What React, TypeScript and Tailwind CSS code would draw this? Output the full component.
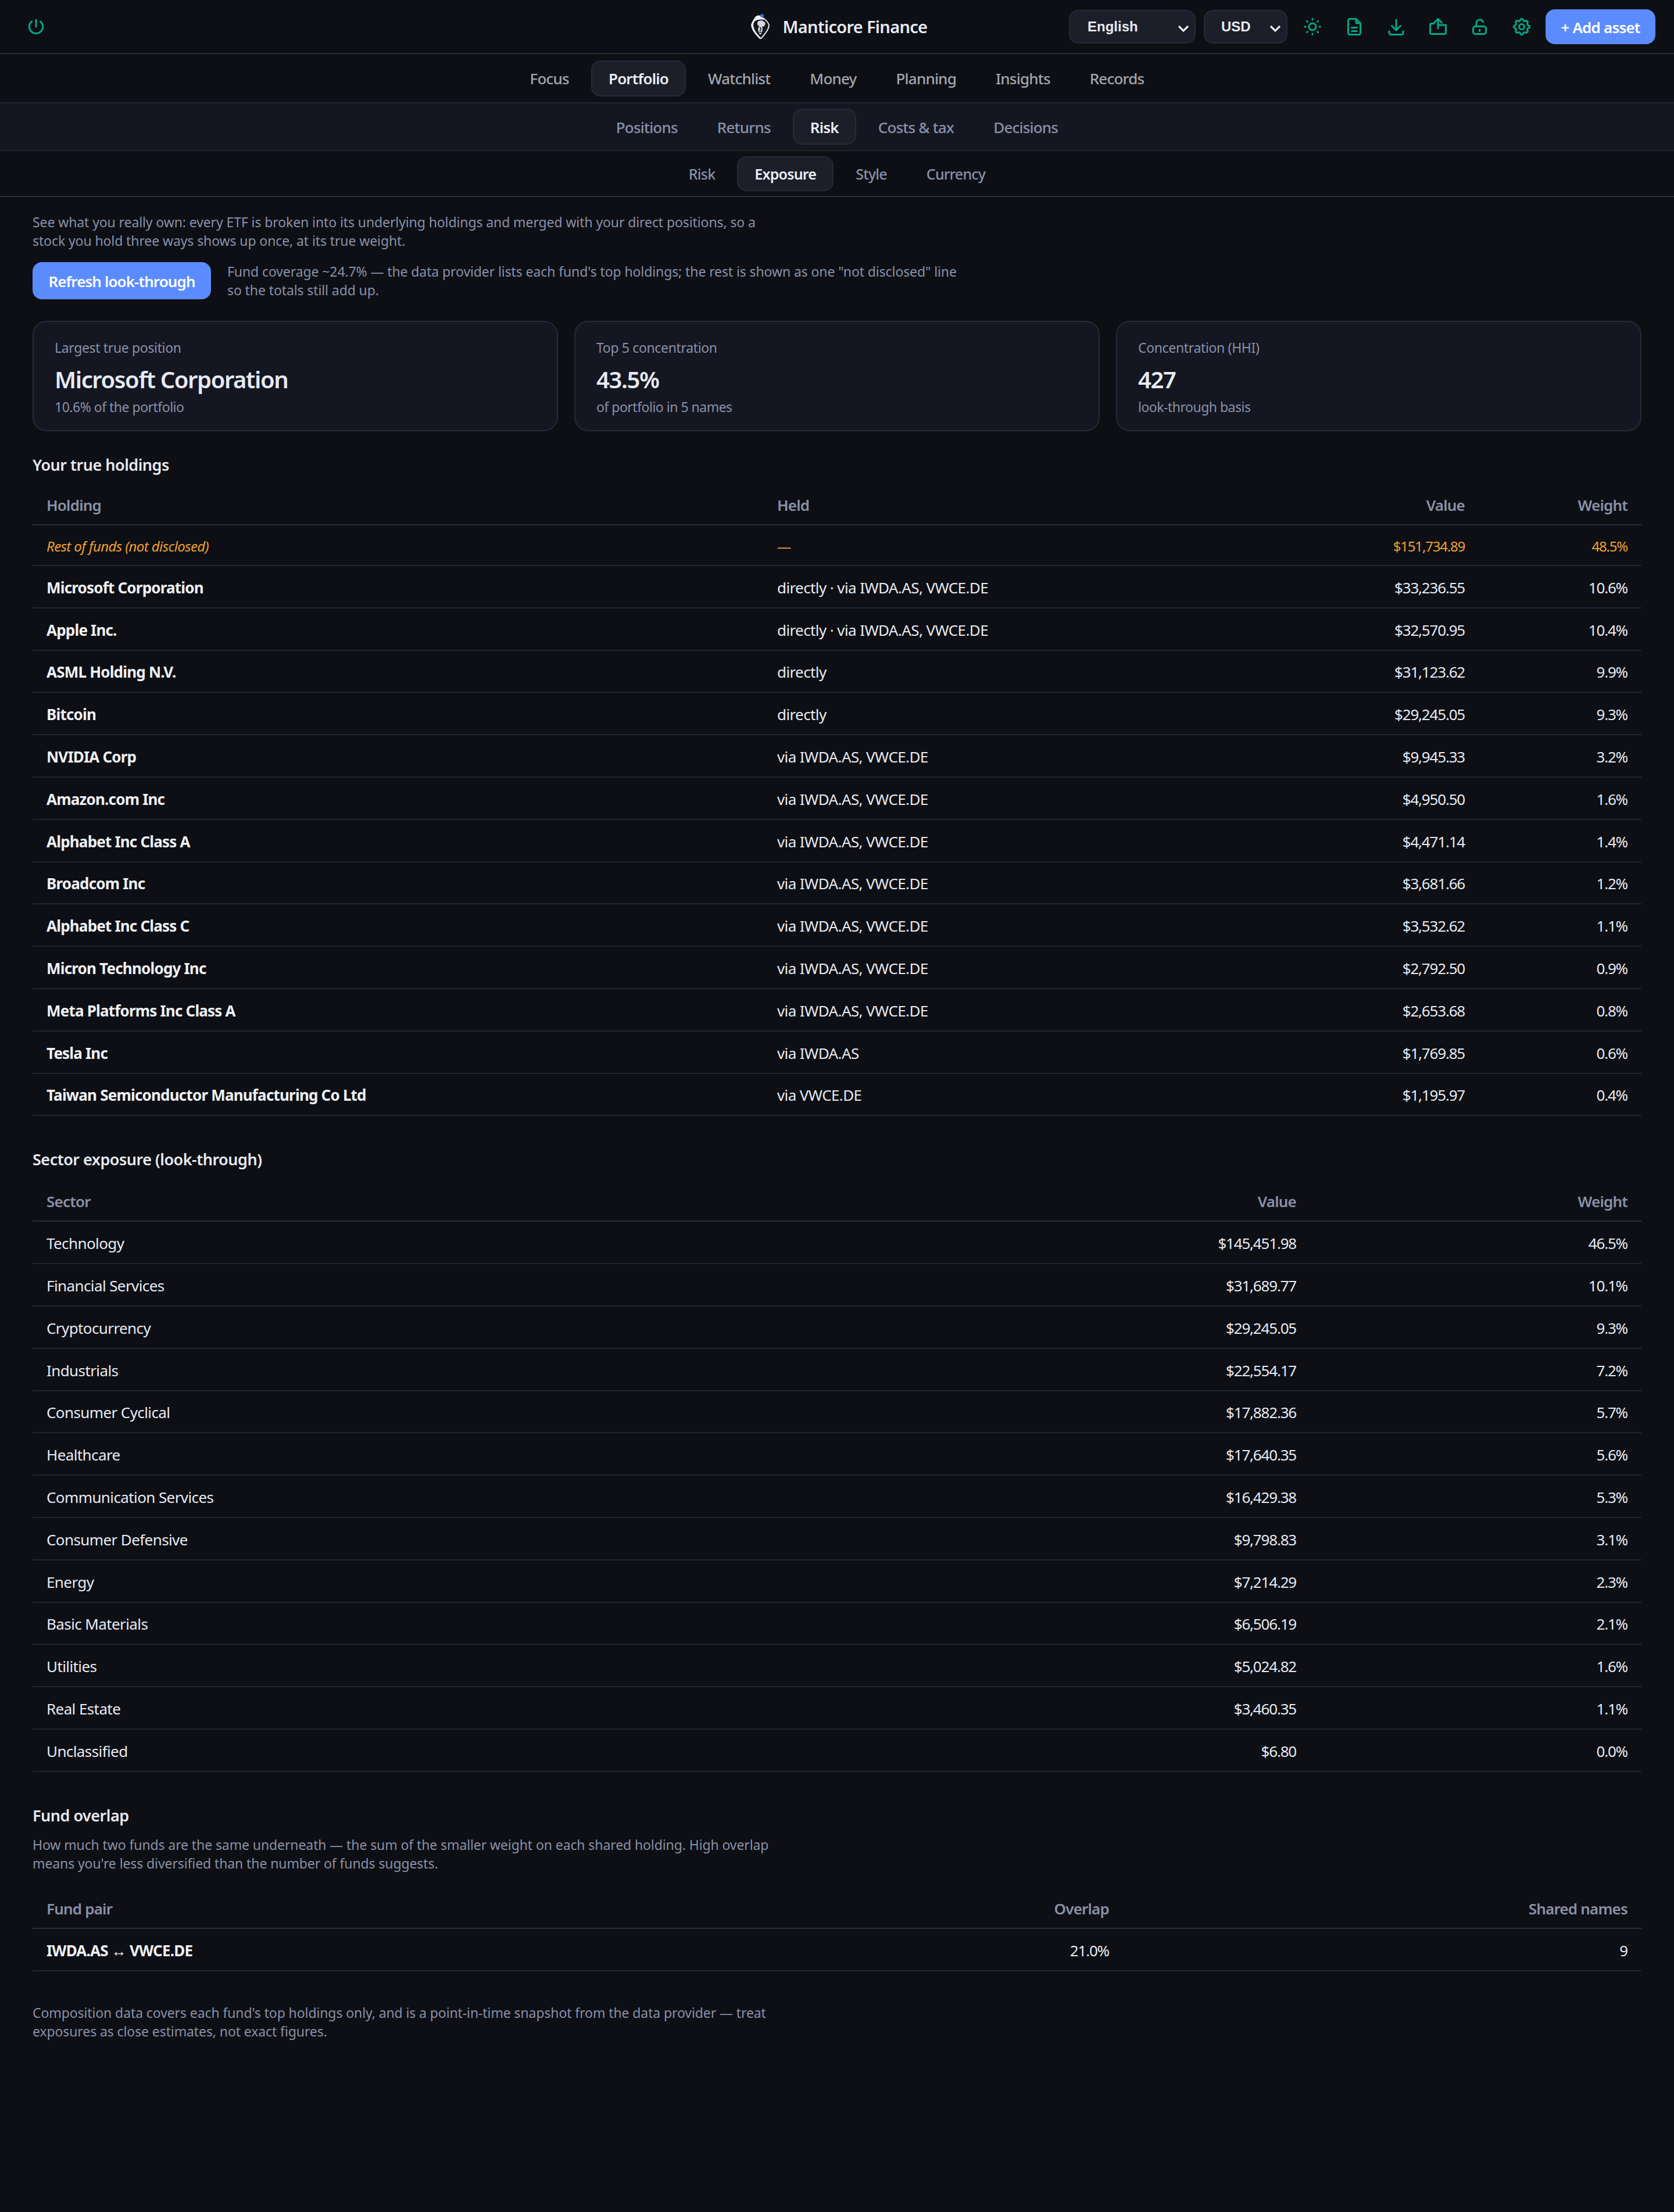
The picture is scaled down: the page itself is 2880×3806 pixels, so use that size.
import React from "react";
import { TbPower, TbSun, TbFileDescription, TbDownload, TbSettings } from "react-icons/tb";

function Logo() {
  return (
    <svg width="34" height="44" viewBox="0 0 34 44" className="shrink-0">
      <path d="M8 6 C10 3 17 2 22 6 C26 9 31 13 33 19 C33 26 27 34 19 43 L16 43 C9 36 2 28 1 19 C2 14 5 10 8 6 Z" fill="#e8eaf0" />
      <path d="M8 12 C13 9 20 9 24 10 C28 13 31 17 31 20 C30 27 24 34 18 41 C12 35 6 28 5 20 C5 17 6 14 8 12 Z" fill="#17181f" />
      <path d="M13 13 C17 10 24 11 26 17 L23 22 L20 21 C22 26 21 31 17 36 C13 31 12 26 15 21 C12 19 11 16 13 13 Z" fill="#d5d8e0" />
      <path d="M16 23 C19 25 19 27 16 29 M15 31 C17 32 18 32 19 31" stroke="#17181f" strokeWidth="1.6" fill="none" />
      <path d="M8 6 C10 2 17 1 21 6 L14 9 Z" fill="#f6f7fa" />
      <circle cx="20" cy="3" r="3" fill="#2f6fe0" />
    </svg>
  );
}

function ShareIcon() {
  return (
    <svg width="36" height="36" viewBox="0 0 36 36" fill="none" stroke="#00a886" strokeWidth="3" strokeLinecap="round" strokeLinejoin="round">
      <path d="M11 12.5H7A2.5 2.5 0 0 0 4.500 15V28A2.500 2.500 0 0 0 7 30.500H29A2.500 2.500 0 0 0 31.500 28V15H18" />
      <path d="M18 4.500V21" />
      <path d="M11.500 11 18 4.500 24.500 11" />
    </svg>
  );
}

function LockIcon() {
  return (
    <svg width="36" height="36" viewBox="0 0 36 36" fill="none" stroke="#00a886" strokeWidth="3" strokeLinecap="round" strokeLinejoin="round">
      <rect x="6.500" y="17.500" width="22" height="13" rx="3.500" />
      <path d="M12 17.500V12a6 6 0 0 1 11.500-2.400" />
      <path d="M17.500 23v2.500" />
    </svg>
  );
}

function Chevron() {
  return (
    <svg width="20" height="12" viewBox="0 0 20 12" fill="none" stroke="#e8eaf2" strokeWidth="3.200" className="absolute right-[9px] top-[24px]">
      <path d="M2 2 10 10 18 2" />
    </svg>
  );
}

function Tab({ label, active, h, tone }: { label: string; active?: boolean; h: string; tone: string }) {
  return (
    <div
      className={`flex items-center justify-center rounded-[16px] border-2 px-[28px] pt-[2px] font-medium ${h} ${
        active ? "border-[#262a36] bg-[#1c1f2a] font-semibold text-[#eceef4]" : `border-transparent ${tone}`
      }`}
    >
      {label}
    </div>
  );
}

const holdings: [string, string, string, string][] = [
  ["Microsoft Corporation", "directly · via IWDA.AS, VWCE.DE", "$33,236.55", "10.6%"],
  ["Apple Inc.", "directly · via IWDA.AS, VWCE.DE", "$32,570.95", "10.4%"],
  ["ASML Holding N.V.", "directly", "$31,123.62", "9.9%"],
  ["Bitcoin", "directly", "$29,245.05", "9.3%"],
  ["NVIDIA Corp", "via IWDA.AS, VWCE.DE", "$9,945.33", "3.2%"],
  ["Amazon.com Inc", "via IWDA.AS, VWCE.DE", "$4,950.50", "1.6%"],
  ["Alphabet Inc Class A", "via IWDA.AS, VWCE.DE", "$4,471.14", "1.4%"],
  ["Broadcom Inc", "via IWDA.AS, VWCE.DE", "$3,681.66", "1.2%"],
  ["Alphabet Inc Class C", "via IWDA.AS, VWCE.DE", "$3,532.62", "1.1%"],
  ["Micron Technology Inc", "via IWDA.AS, VWCE.DE", "$2,792.50", "0.9%"],
  ["Meta Platforms Inc Class A", "via IWDA.AS, VWCE.DE", "$2,653.68", "0.8%"],
  ["Tesla Inc", "via IWDA.AS", "$1,769.85", "0.6%"],
  ["Taiwan Semiconductor Manufacturing Co Ltd", "via VWCE.DE", "$1,195.97", "0.4%"],
];

const sectors: [string, string, string][] = [
  ["Technology", "$145,451.98", "46.5%"],
  ["Financial Services", "$31,689.77", "10.1%"],
  ["Cryptocurrency", "$29,245.05", "9.3%"],
  ["Industrials", "$22,554.17", "7.2%"],
  ["Consumer Cyclical", "$17,882.36", "5.7%"],
  ["Healthcare", "$17,640.35", "5.6%"],
  ["Communication Services", "$16,429.38", "5.3%"],
  ["Consumer Defensive", "$9,798.83", "3.1%"],
  ["Energy", "$7,214.29", "2.3%"],
  ["Basic Materials", "$6,506.19", "2.1%"],
  ["Utilities", "$5,024.82", "1.6%"],
  ["Real Estate", "$3,460.35", "1.1%"],
  ["Unclassified", "$6.80", "0.0%"],
];

const th = "h-[67px] border-b-2 border-[#2a2d3a] px-[24px] text-left text-[26px] font-semibold tracking-[-0.8px] text-[#8b90a8]";
const thR = "h-[67px] border-b-2 border-[#2a2d3a] px-[24px] text-right text-[26px] font-semibold tracking-[-0.8px] text-[#8b90a8]";
const td = "h-[72.8px] border-b-2 border-[#22252f] px-[24px] pt-[4px] text-[26px] text-[#e8eaf2]";
const tdB = "h-[72.8px] border-b-2 border-[#22252f] px-[24px] pt-[4px] text-[26px] font-bold tracking-[-0.8px] text-[#f0f1f6]";
const tdN = "h-[72.8px] border-b-2 border-[#22252f] px-[24px] pt-[4px] text-right text-[26px] tracking-[-1.2px] text-[#e8eaf2]";
const tdO = "h-[70px] border-b-2 border-[#22252f] px-[24px] pt-[3px] text-[24px] text-[#f0a030]";
const tdON = "h-[70px] border-b-2 border-[#22252f] px-[24px] pt-[3px] text-right text-[24px] tracking-[-1.2px] text-[#f0a030]";
const para = "max-w-[1270px] text-[23px] leading-[32px] tracking-[-0.1px] text-[#8b90a8]";
const h2 = "text-[27px] font-semibold leading-[36px] tracking-[-0.5px]";

function Card({ label, value, sub }: { label: string; value: string; sub: string }) {
  return (
    <div className="h-[190px] rounded-[24px] border-2 border-[#262a36] bg-[#141722] px-[36px] pt-[26px]">
      <div className="text-[23px] leading-[36px] tracking-[-0.35px] text-[#8b90a8]">{label}</div>
      <div className="mt-[11px] text-[40px] font-semibold leading-[52px] tracking-[-1.4px] text-[#e8eaf2]">{value}</div>
      <div className="mt-[3px] text-[23px] leading-[36px] tracking-[-0.5px] text-[#8b90a8]">{sub}</div>
    </div>
  );
}

export default function App() {
  return (
    <div className="min-h-[3806px] w-[2880px] bg-[#0d0f14] font-['Noto_Sans','Open_Sans',sans-serif] tracking-[-0.6px] text-[#e8eaf2]">
      <header className="grid h-[93px] grid-cols-[1fr_auto_1fr] items-center border-b-2 border-[#2a2a3c] pl-[38px] pr-[32px]">
        <TbPower size={36} color="#00a886" className="ml-[6px]" />
        <div className="flex items-center gap-[22px]">
          <Logo />
          <span className="text-[29px] font-semibold tracking-[-0.7px] text-[#e8eaf2]">Manticore Finance</span>
        </div>
        <div className="flex items-center justify-end">
          <div className="relative flex h-[58px] w-[218px] items-center rounded-[16px] border-2 border-[#262a36] bg-[#1c1f2a] pl-[30px] font-['Liberation_Sans',sans-serif] text-[24px] font-bold tracking-normal text-[#e8eaf2]">
            English
            <Chevron />
          </div>
          <div className="relative ml-[14px] flex h-[58px] w-[144px] items-center rounded-[16px] border-2 border-[#262a36] bg-[#1c1f2a] pl-[28px] font-['Liberation_Sans',sans-serif] text-[24px] font-bold tracking-normal text-[#e8eaf2]">
            USD
            <Chevron />
          </div>
          <div className="ml-[25px] flex w-[396px] items-center gap-[36px]">
            <TbSun size={36} color="#00a886" />
            <TbFileDescription size={36} color="#00a886" />
            <TbDownload size={36} color="#00a886" />
            <ShareIcon />
            <LockIcon />
            <TbSettings size={36} color="#00a886" />
          </div>
          <button className="ml-[23px] h-[60px] w-[189px] rounded-[16px] bg-[#5b8cff] pt-[4px] text-[26px] font-semibold tracking-[-0.8px] text-white">+ Add asset</button>
        </div>
      </header>

      <nav className="flex h-[85px] items-center justify-center gap-[8px] border-b-2 border-[#22252f] text-[26px] tracking-[-0.8px]">
        {["Focus", "Portfolio", "Watchlist", "Money", "Planning", "Insights", "Records"].map((t) => (
          <Tab key={t} label={t} active={t === "Portfolio"} h="h-[62px]" tone="text-[#a3a5ad]" />
        ))}
      </nav>
      <nav className="flex h-[82px] items-center justify-center gap-[8px] border-b-2 border-[#22252f] bg-[#141722] text-[26px] tracking-[-0.8px]">
        {["Positions", "Returns", "Risk", "Costs & tax", "Decisions"].map((t) => (
          <Tab key={t} label={t} active={t === "Risk"} h="h-[62px]" tone="text-[#8b90a8]" />
        ))}
      </nav>
      <nav className="flex h-[79px] items-center justify-center gap-[8px] border-b-2 border-[#2a2d3a] text-[25px] tracking-[-0.8px]">
        {["Risk", "Exposure", "Style", "Currency"].map((t) => (
          <Tab key={t} label={t} active={t === "Exposure"} h="h-[60px]" tone="text-[#8b90a8]" />
        ))}
      </nav>

      <main className="px-[56px] pt-[27px]">
        <p className={para}>
          See what you really own: every ETF is broken into its underlying holdings and merged with your direct positions, so a stock you hold three ways shows up once, at its true weight.
        </p>
        <div className="mt-[21px] flex items-center gap-[28px]">
          <button className="h-[64px] w-[307px] rounded-[16px] bg-[#5b8cff] pt-[2px] text-[26px] font-semibold tracking-[-0.9px] text-white">Refresh look-through</button>
          <p className={para}>
            Fund coverage ~24.7% — the data provider lists each fund's top holdings; the rest is shown as one "not disclosed" line so the totals still add up.
          </p>
        </div>

        <div className="mt-[37px] grid grid-cols-3 gap-[28px]">
          <Card label="Largest true position" value="Microsoft Corporation" sub="10.6% of the portfolio" />
          <Card label="Top 5 concentration" value="43.5%" sub="of portfolio in 5 names" />
          <Card label="Concentration (HHI)" value="427" sub="look-through basis" />
        </div>

        <h2 className={`mt-[40px] ${h2}`}>Your true holdings</h2>
        <table className="mt-[19px] w-full table-fixed border-separate border-spacing-0">
          <colgroup>
            <col className="w-[1257px]" />
            <col className="w-[800px]" />
            <col className="w-[431px]" />
            <col className="w-[280px]" />
          </colgroup>
          <thead>
            <tr>
              <th className={th}>Holding</th>
              <th className={th}>Held</th>
              <th className={thR}>Value</th>
              <th className={thR}>Weight</th>
            </tr>
          </thead>
          <tbody>
            <tr>
              <td className={`${tdO} italic`}>Rest of funds (not disclosed)</td>
              <td className={tdO}>—</td>
              <td className={tdON}>$151,734.89</td>
              <td className={tdON}>48.5%</td>
            </tr>
            {holdings.map((r) => (
              <tr key={r[0]}>
                <td className={tdB}>{r[0]}</td>
                <td className={td}>{r[1]}</td>
                <td className={tdN}>{r[2]}</td>
                <td className={tdN}>{r[3]}</td>
              </tr>
            ))}
          </tbody>
        </table>

        <h2 className={`mt-[57px] ${h2}`}>Sector exposure (look-through)</h2>
        <table className="mt-[22px] w-full table-fixed border-separate border-spacing-0">
          <colgroup>
            <col className="w-[1700px]" />
            <col className="w-[498px]" />
            <col className="w-[570px]" />
          </colgroup>
          <thead>
            <tr>
              <th className={th}>Sector</th>
              <th className={thR}>Value</th>
              <th className={thR}>Weight</th>
            </tr>
          </thead>
          <tbody>
            {sectors.map((r) => (
              <tr key={r[0]}>
                <td className={td}>{r[0]}</td>
                <td className={tdN}>{r[1]}</td>
                <td className={tdN}>{r[2]}</td>
              </tr>
            ))}
          </tbody>
        </table>

        <h2 className={`mt-[57px] ${h2}`}>Fund overlap</h2>
        <p className={`mt-[16px] ${para}`}>
          How much two funds are the same underneath — the sum of the smaller weight on each shared holding. High overlap means you're less diversified than the number of funds suggests.
        </p>
        <table className="mt-[30px] w-full table-fixed border-separate border-spacing-0">
          <colgroup>
            <col className="w-[1200px]" />
            <col className="w-[676px]" />
            <col className="w-[892px]" />
          </colgroup>
          <thead>
            <tr>
              <th className={th}>Fund pair</th>
              <th className={thR}>Overlap</th>
              <th className={thR}>Shared names</th>
            </tr>
          </thead>
          <tbody>
            <tr>
              <td className={tdB}>IWDA.AS ↔ VWCE.DE</td>
              <td className={tdN}>21.0%</td>
              <td className={tdN}>9</td>
            </tr>
          </tbody>
        </table>
        <p className={`mt-[55px] ${para}`}>
          Composition data covers each fund's top holdings only, and is a point-in-time snapshot from the data provider — treat exposures as close estimates, not exact figures.
        </p>
      </main>
    </div>
  );
}
